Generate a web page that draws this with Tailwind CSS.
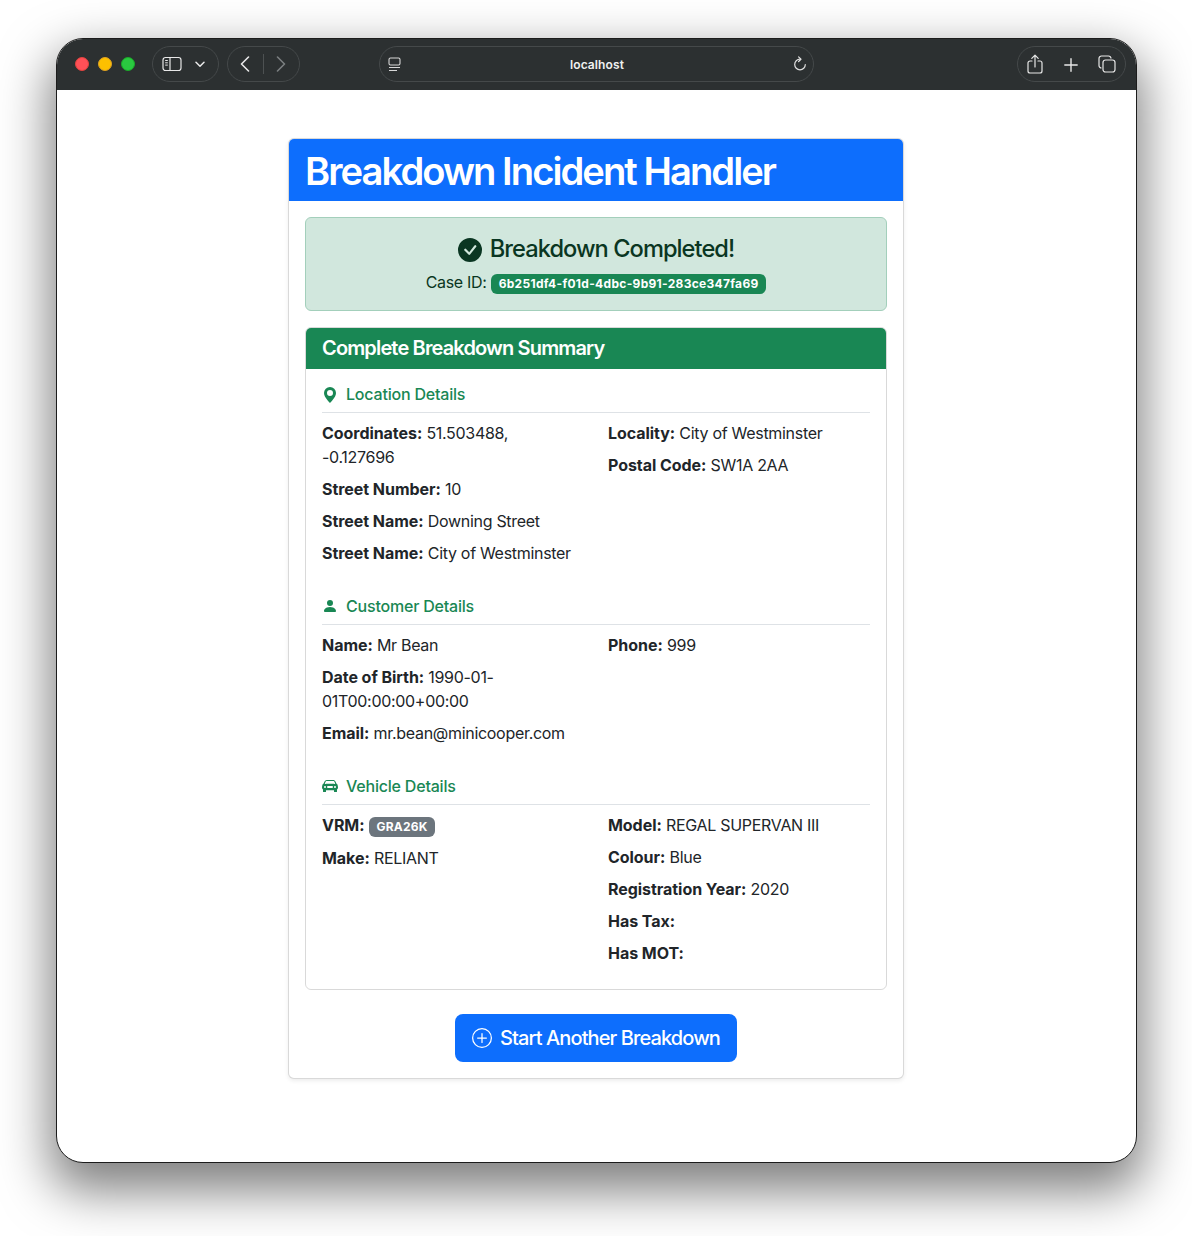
<!DOCTYPE html>
<html lang="en">
<head>
<meta charset="utf-8">
<title>Breakdown Incident Handler</title>
<script src="https://cdn.jsdelivr.net/npm/@tailwindcss/browser@4"></script>
</head>
<body class="bg-white font-['Inter',sans-serif] text-[16px] leading-[24px] text-[#212529] tracking-[-0.3px]">
<div class="w-[1192px] h-[1236px] pt-[38px] pl-[56px] overflow-hidden">
  <div class="w-[1081px] h-[1125px] rounded-[27px] border border-[#1c1c1c] bg-white overflow-hidden shadow-[0_22px_50px_6px_rgba(0,0,0,0.5)]">
    <!-- title bar -->
    <div class="h-[51px] bg-[#2c3031] flex items-center pl-[18px] pb-[1px] text-[#e8e8e8]">
      <div class="flex gap-[9px] mr-[17px]">
        <span class="w-[14px] h-[14px] rounded-full bg-[#ff5057] border border-[#e0443e]"></span>
        <span class="w-[14px] h-[14px] rounded-full bg-[#fdc000] border border-[#dea123]"></span>
        <span class="w-[14px] h-[14px] rounded-full bg-[#2ac940] border border-[#1aab29]"></span>
      </div>
      <div class="w-[67px] h-[36px] rounded-full border border-[#45494a] flex items-center pl-[9px] gap-[13px] mr-[8px]">
        <svg width="20" height="16" viewBox="0 0 20 16" fill="none" stroke="#e8e8e8" stroke-width="1.2"><rect x="1" y="1.5" width="18" height="13" rx="2.5"/><path d="M8 1.5v13"/><path d="M3.2 4.5h2.6M3.2 6.8h2.6M3.2 9.1h2.6" stroke-width="1"/></svg>
        <svg width="10" height="7" viewBox="0 0 10 7" fill="none" stroke="#e8e8e8" stroke-width="1.5" stroke-linecap="round" stroke-linejoin="round"><path d="M1 1.2 5 5.2 9 1.2"/></svg>
      </div>
      <div class="w-[73px] h-[36px] rounded-full border border-[#45494a] flex items-center pl-[12px] mr-[79px]">
        <svg width="10" height="16" viewBox="0 0 10 16" fill="none" stroke="#e8e8e8" stroke-width="1.6" stroke-linecap="round" stroke-linejoin="round"><path d="M8.5 1 1.5 8l7 7"/></svg>
        <span class="w-px h-[20px] bg-[#4d5152] ml-[13px] mr-[12px]"></span>
        <svg width="10" height="16" viewBox="0 0 10 16" fill="none" stroke="#7b7f80" stroke-width="1.6" stroke-linecap="round" stroke-linejoin="round"><path d="M1.5 1l7 7-7 7"/></svg>
      </div>
      <div class="w-[435px] h-[36px] rounded-full border border-[#45494a] flex items-center justify-between pl-[8px] pr-[6px] mr-[203px]">
        <svg width="13" height="15" viewBox="0 0 13 15" fill="none" stroke="#d8d8d8" stroke-width="1.1"><rect x="1" y="1" width="11" height="7" rx="1.5"/><path d="M1 10.5h11M1 13.5h8"/></svg>
        <span class="text-[12px] font-semibold text-[#f0f0f0] leading-[16px] tracking-[0.1px] mt-[1px]">localhost</span>
        <svg width="14" height="16" viewBox="0 0 14 16" fill="none" stroke="#e0e0e0" stroke-width="1.2" stroke-linecap="round" stroke-linejoin="round"><path d="M7 3.2a5.3 5.3 0 1 0 5.3 5.3"/><path d="M5.6.9 8 3.2 5.6 5.5"/></svg>
      </div>
      <div class="w-[109px] h-[36px] rounded-full border border-[#45494a] flex items-center pl-[9px]">
        <svg class="mr-[21px]" width="16" height="20" viewBox="0 0 16 20" fill="none" stroke="#e8e8e8" stroke-width="1.2" stroke-linecap="round" stroke-linejoin="round"><path d="M5 7H3a2 2 0 0 0-2 2v8a2 2 0 0 0 2 2h10a2 2 0 0 0 2-2V9a2 2 0 0 0-2-2h-2"/><path d="M8 13V1.5M4.8 4.4 8 1.2l3.200 3.200"/></svg>
        <svg class="mr-[20px] mt-[1px]" width="14" height="14" viewBox="0 0 14 14" fill="none" stroke="#e8e8e8" stroke-width="1.4" stroke-linecap="round"><path d="M7 .8v12.400M.8 7h12.400"/></svg>
        <svg width="18" height="18" viewBox="0 0 18 18" fill="none" stroke="#e8e8e8" stroke-width="1.2"><rect x="5" y="5" width="12" height="12" rx="2.500"/><path d="M3.500 13A2.500 2.500 0 0 1 1 10.500v-7A2.500 2.500 0 0 1 3.500 1h7A2.500 2.500 0 0 1 13 3.500"/></svg>
      </div>
    </div>
    <!-- page -->
    <div class="pt-[48px] pl-[231px]">
      <div class="w-[616px] rounded-[6px] border border-black/15 bg-white shadow-[0_2px_4px_rgba(0,0,0,0.075)]">
        <div class="bg-[#0d6efd] text-white px-[16px] pt-[9.5px] pb-[6.5px] rounded-t-[5px]">
          <h1 class="text-[38.17px] leading-[45.8px] font-semibold tracking-[-1.95px]">Breakdown Incident Handler</h1>
        </div>
        <div class="p-[16px]">
          <div class="rounded-[6px] border border-[#a3cfbb] bg-[#d1e7dd] text-[#0a3622] pt-[17.5px] pb-[16px] px-[16px] text-center mb-[16px]">
            <h4 class="text-[23.64px] leading-[28.4px] font-medium tracking-[-0.95px] mb-[6.5px] flex items-center justify-center gap-[8px]">
              <svg width="24" height="24" viewBox="0 0 16 16" fill="currentColor"><path d="M16 8A8 8 0 1 1 0 8a8 8 0 0 1 16 0zm-3.970-3.030a.75.75 0 0 0-1.080.022L7.477 9.417 5.384 7.323a.75.75 0 0 0-1.060 1.060L6.970 11.030a.75.75 0 0 0 1.079-.020l3.992-4.990a.75.75 0 0 0-.010-1.050z"/></svg>
              <span>Breakdown Completed!</span>
            </h4>
            <p>Case ID: <span class="inline-block align-baseline rounded-[6px] bg-[#198754] text-white text-[12px] leading-[12px] font-bold tracking-[0.3px] px-[7.8px] py-[4.2px]">6b251df4-f01d-4dbc-9b91-283ce347fa69</span></p>
          </div>
          <div class="rounded-[6px] border border-black/15 mb-[24px]">
            <div class="bg-[#198754] text-white px-[16px] pt-[8px] pb-[9px] rounded-t-[5px]">
              <h5 class="text-[20px] leading-[24px] font-semibold tracking-[-0.85px]">Complete Breakdown Summary</h5>
            </div>
            <div class="px-[16px] pt-[15px] pb-[16px]">
              <section class="mb-[24px]">
                <h6 class="text-[16px] leading-[19.2px] font-medium tracking-[-0.2px] text-[#198754] flex items-center gap-[8px] pt-[1px] pb-[7px] border-b border-[#dee2e6] mb-[8px]">
                  <svg width="16" height="16" viewBox="0 0 16 16" fill="currentColor"><path d="M8 16s6-5.686 6-10A6 6 0 0 0 2 6c0 4.314 6 10 6 10zm0-7a3 3 0 1 1 0-6 3 3 0 0 1 0 6z"/></svg>
                  <span>Location Details</span>
                </h6>
                <div class="grid grid-cols-2 gap-x-[24px]">
                  <div class="flex flex-col gap-[8px]">
                    <p><strong class="font-bold tracking-[-0.05px]">Coordinates:</strong> 51.503488, -0.127696</p>
                    <p><strong class="font-bold tracking-[-0.05px]">Street Number:</strong> 10</p>
                    <p><strong class="font-bold tracking-[-0.05px]">Street Name:</strong> Downing Street</p>
                    <p class="mb-[8px]"><strong class="font-bold tracking-[-0.05px]">Street Name:</strong> City of Westminster</p>
                  </div>
                  <div class="flex flex-col gap-[8px]">
                    <p><strong class="font-bold tracking-[-0.05px]">Locality:</strong> City of Westminster</p>
                    <p><strong class="font-bold tracking-[-0.05px]">Postal Code:</strong> SW1A 2AA</p>
                  </div>
                </div>
              </section>
              <section class="mb-[24px]">
                <h6 class="text-[16px] leading-[19.2px] font-medium tracking-[-0.2px] text-[#198754] flex items-center gap-[8px] pb-[8px] border-b border-[#dee2e6] mb-[8px]">
                  <svg width="16" height="16" viewBox="0 0 16 16" fill="currentColor"><path d="M3 14s-1 0-1-1 1-4 6-4 6 3 6 4-1 1-1 1H3Zm5-6a3 3 0 1 0 0-6 3 3 0 0 0 0 6Z"/></svg>
                  <span>Customer Details</span>
                </h6>
                <div class="grid grid-cols-2 gap-x-[24px]">
                  <div class="flex flex-col gap-[8px]">
                    <p><strong class="font-bold tracking-[-0.05px]">Name:</strong> Mr Bean</p>
                    <p><strong class="font-bold tracking-[-0.05px]">Date of Birth:</strong> 1990-01-01T00:00:00+00:00</p>
                    <p class="mb-[8px]"><strong class="font-bold tracking-[-0.05px]">Email:</strong> mr.bean@minicooper.com</p>
                  </div>
                  <div class="flex flex-col gap-[8px]">
                    <p><strong class="font-bold tracking-[-0.05px]">Phone:</strong> 999</p>
                  </div>
                </div>
              </section>
              <section>
                <h6 class="text-[16px] leading-[19.2px] font-medium tracking-[-0.2px] text-[#198754] flex items-center gap-[8px] pb-[8px] border-b border-[#dee2e6] mb-[8px]">
                  <svg width="16" height="16" viewBox="0 0 16 16" fill="currentColor"><path d="M2.520 3.515A2.500 2.500 0 0 1 4.820 2h6.362c1 0 1.904.596 2.298 1.515l.792 1.848c.075.175.21.319.38.404.5.25.855.715.965 1.262l.335 1.679c.033.161.049.325.049.49v.413c0 .814-.39 1.543-1 1.997V13.500a.5.5 0 0 1-.5.5h-2a.5.5 0 0 1-.5-.5v-1.338c-1.292.048-2.745.088-4 .088s-2.708-.04-4-.088V13.500a.5.5 0 0 1-.5.5h-2a.5.5 0 0 1-.5-.5v-1.892c-.61-.454-1-1.183-1-1.997v-.413a2.500 2.500 0 0 1 .049-.49l.335-1.680c.11-.546.465-1.012.964-1.261a.807.807 0 0 0 .381-.404l.792-1.848ZM3 10a1 1 0 1 0 0-2 1 1 0 0 0 0 2Zm10 0a1 1 0 1 0 0-2 1 1 0 0 0 0 2ZM6 8a1 1 0 0 0 0 2h4a1 1 0 1 0 0-2H6ZM2.906 5.189a.51.51 0 0 0 .497.731c.91-.073 3.350-.17 4.597-.17 1.247 0 3.688.097 4.597.17a.51.51 0 0 0 .497-.731l-.956-1.913A.5.5 0 0 0 11.691 3H4.309a.5.5 0 0 0-.447.276L2.906 5.190Z"/></svg>
                  <span>Vehicle Details</span>
                </h6>
                <div class="grid grid-cols-2 gap-x-[24px]">
                  <div class="flex flex-col gap-[8px]">
                    <p class="pb-[1px]"><strong class="font-bold tracking-[-0.05px]">VRM:</strong> <span class="inline-block rounded-[6px] bg-[#6c757d] text-white text-[12px] leading-[12px] font-bold tracking-[0.2px] px-[7.8px] py-[4.2px]">GRA26K</span></p>
                    <p><strong class="font-bold tracking-[-0.05px]">Make:</strong> RELIANT</p>
                  </div>
                  <div class="flex flex-col gap-[8px]">
                    <p><strong class="font-bold tracking-[-0.05px]">Model:</strong> REGAL SUPERVAN III</p>
                    <p><strong class="font-bold tracking-[-0.05px]">Colour:</strong> Blue</p>
                    <p><strong class="font-bold tracking-[-0.05px]">Registration Year:</strong> 2020</p>
                    <p><strong class="font-bold tracking-[-0.05px]">Has Tax:</strong></p>
                    <p class="mb-[8px]"><strong class="font-bold tracking-[-0.05px]">Has MOT:</strong></p>
                  </div>
                </div>
              </section>
            </div>
          </div>
          <div class="flex justify-center">
            <a class="h-[48px] px-[17px] rounded-[8px] bg-[#0d6efd] text-white text-[20px] leading-[30px] font-medium tracking-[-0.9px] flex items-center gap-[8px]">
              <svg width="20" height="20" viewBox="0 0 16 16" fill="currentColor"><path d="M8 15A7 7 0 1 1 8 1a7 7 0 0 1 0 14zm0 1A8 8 0 1 0 8 0a8 8 0 0 0 0 16z"/><path d="M8 4a.5.5 0 0 1 .5.5v3h3a.5.5 0 0 1 0 1h-3v3a.5.5 0 0 1-1 0v-3h-3a.5.5 0 0 1 0-1h3v-3A.5.5 0 0 1 8 4z"/></svg>
              <span>Start Another Breakdown</span>
            </a>
          </div>
        </div>
      </div>
    </div>
  </div>
</div>
</body>
</html>
